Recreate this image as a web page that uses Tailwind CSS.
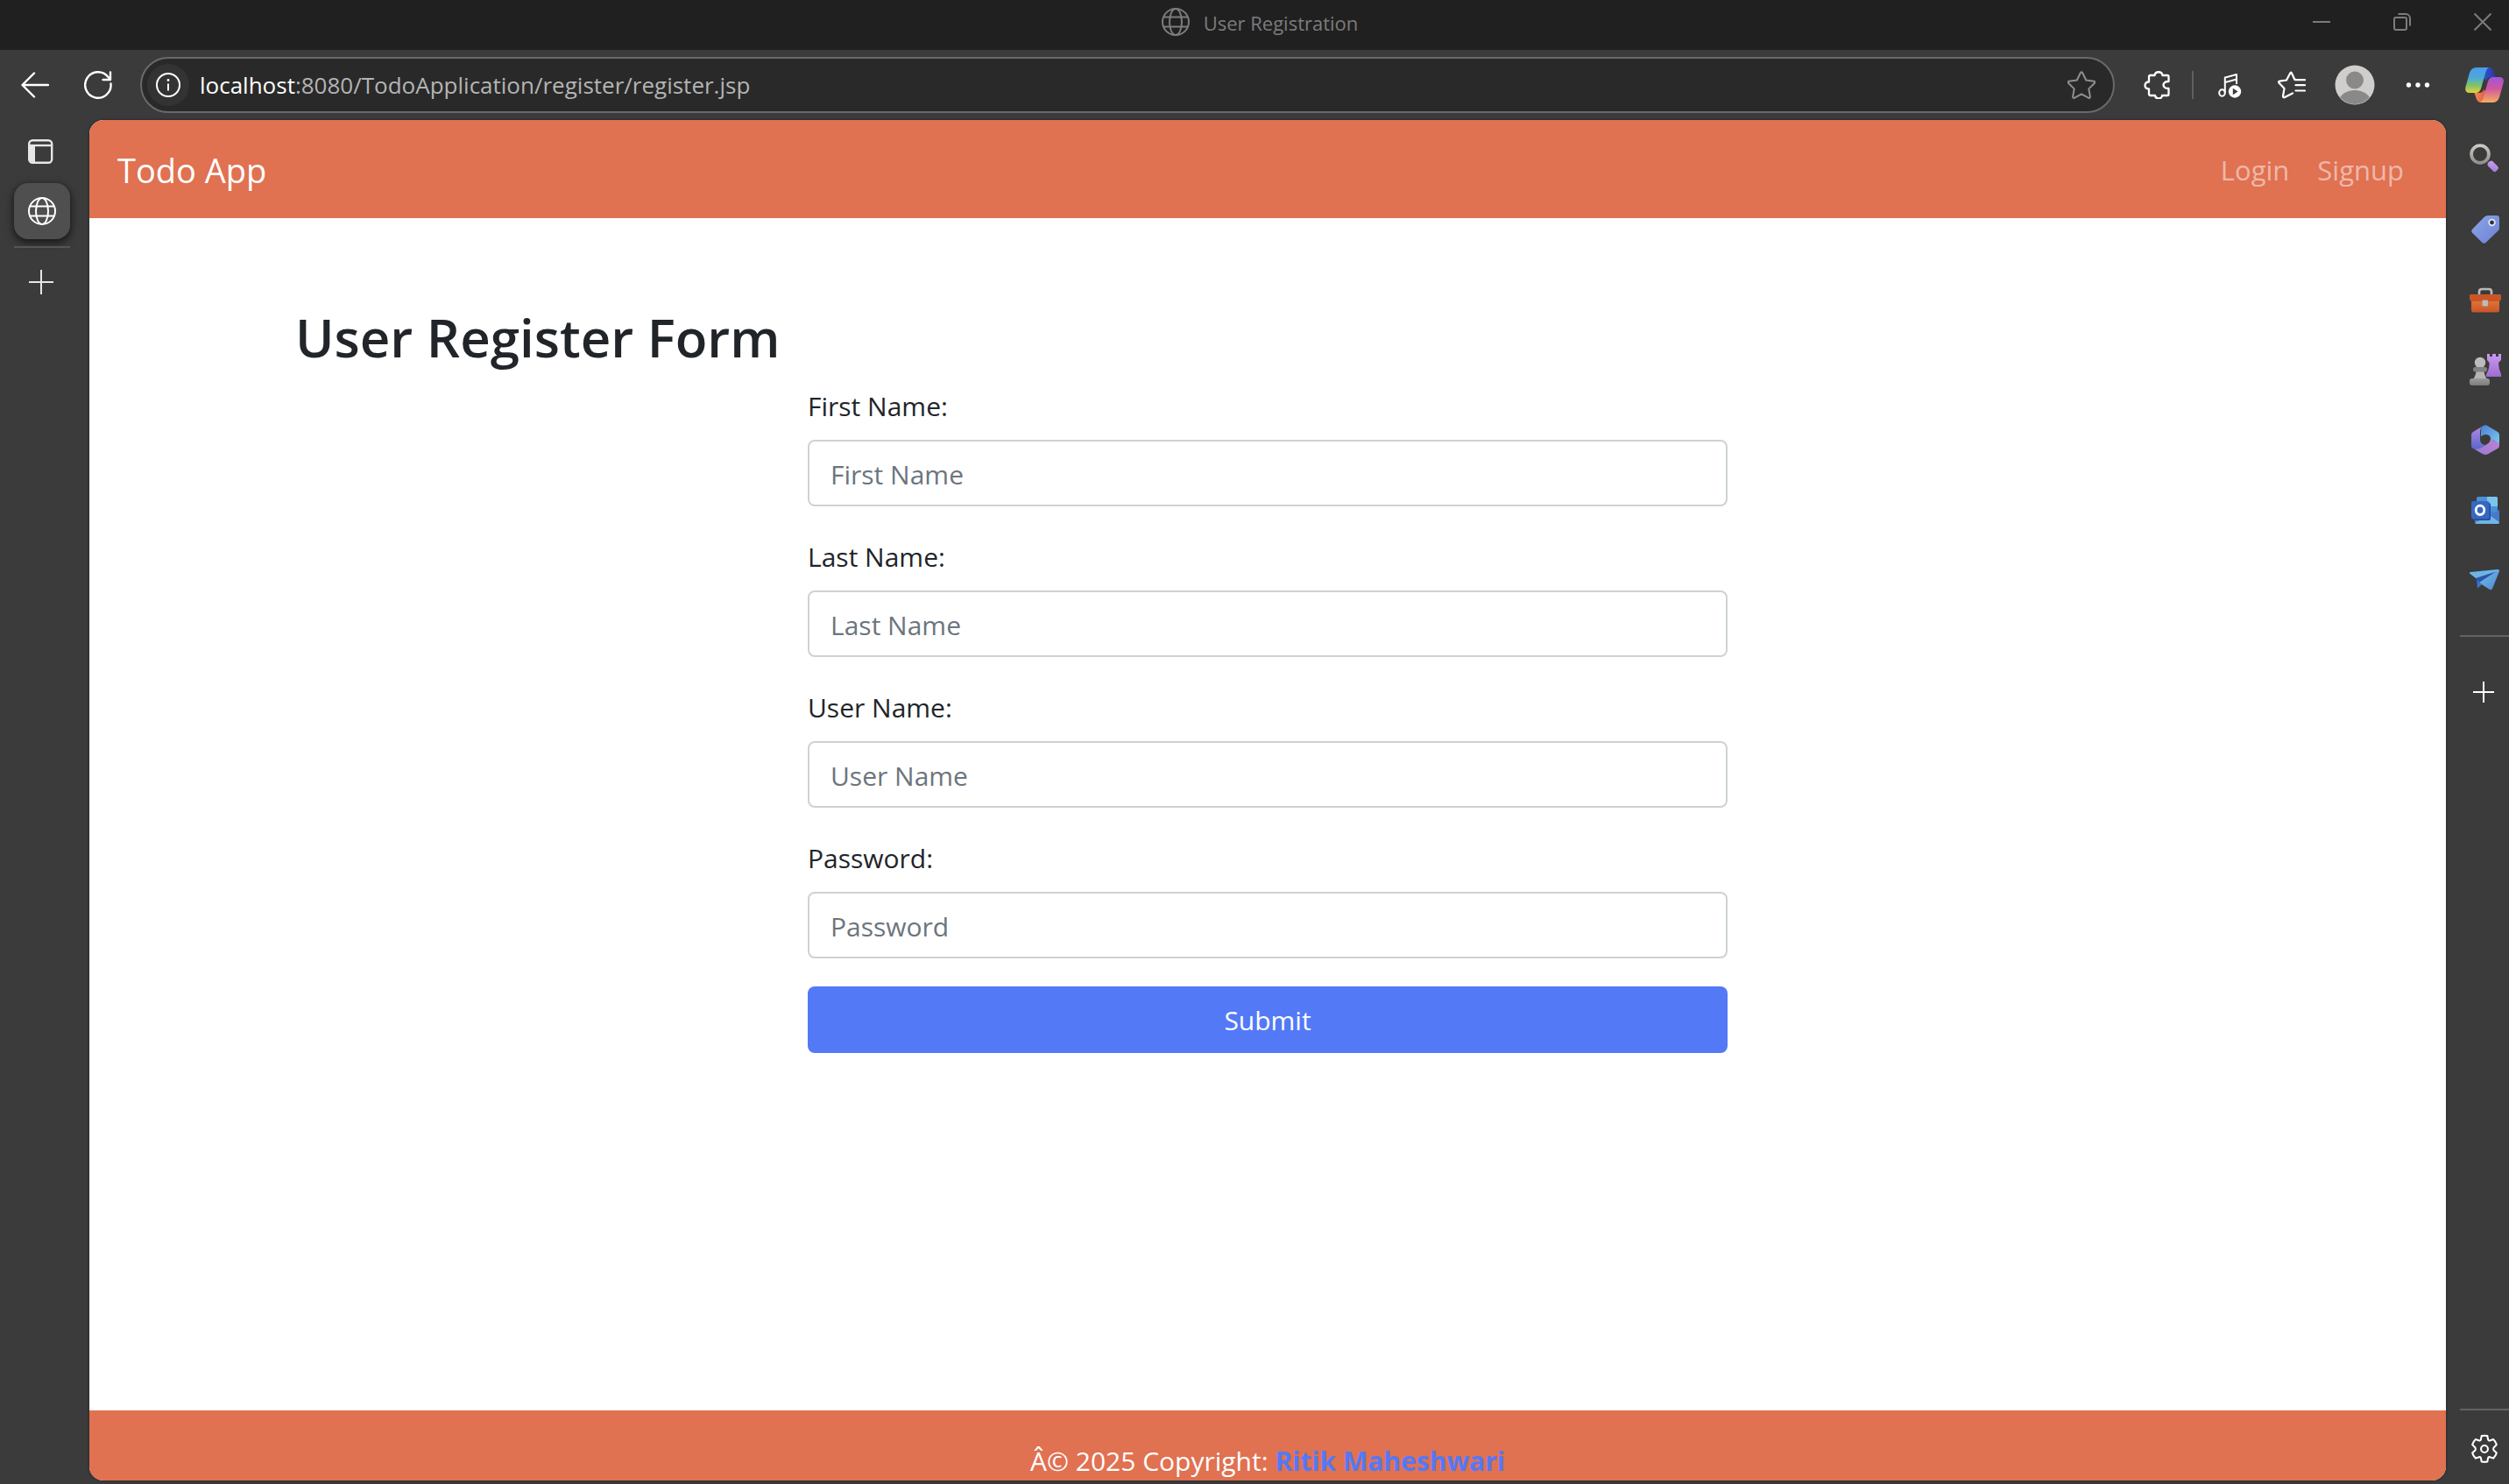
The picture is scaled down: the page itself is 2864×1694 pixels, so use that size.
<!DOCTYPE html>
<html lang="en">
<head>
<meta charset="utf-8">
<meta name="viewport" content="width=device-width, initial-scale=1">
<title>User Registration</title>
<script src="https://cdn.jsdelivr.net/npm/@tailwindcss/browser@4"></script>
</head>
<body class="h-screen overflow-hidden flex flex-col bg-[#3b3b3b] font-['Open_Sans','Noto_Sans',sans-serif]">

<!-- Title bar -->
<header class="shrink-0 h-[57px] bg-[#202020] text-[#7c7c7c] grid grid-cols-[1fr_auto_1fr] pb-[7px]">
  <div></div>
  <div class="flex items-center gap-4 pl-3">
    <svg class="size-8" viewBox="0 0 32 32" fill="none" stroke="currentColor" stroke-width="2"><circle cx="16" cy="16" r="15"/><ellipse cx="16" cy="16" rx="7" ry="15"/><path d="M2 10.500h28M2 21.500h28"/></svg>
    <span class="text-[22px] leading-8 pt-0.5">User Registration</span>
  </div>
  <div class="flex items-center justify-end gap-[72px] pr-5">
    <button aria-label="Minimize"><svg class="size-5" viewBox="0 0 20 20" stroke="currentColor" stroke-width="2"><path d="M0 10h20"/></svg></button>
    <button aria-label="Restore"><svg class="size-5" viewBox="0 0 20 20" fill="none" stroke="currentColor" stroke-width="2"><rect x="1" y="5" width="14" height="14" rx="2"/><path d="M5.500 1H14a5 5 0 0 1 5 5v8.500"/></svg></button>
    <button aria-label="Close"><svg class="size-5" viewBox="0 0 20 20" stroke="currentColor" stroke-width="2"><path d="M.5.5l19 19M19.500.5l-19 19"/></svg></button>
  </div>
</header>

<!-- Toolbar -->
<nav class="shrink-0 h-20 flex items-center pl-6 text-white" aria-label="Browser">
  <button aria-label="Back" class="mr-10"><svg class="size-8" viewBox="0 0 32 32" fill="none" stroke="currentColor" stroke-width="2.400" stroke-linecap="round" stroke-linejoin="round"><path d="M15 2.500L1.500 16 15 29.500M2 16h29"/></svg></button>
  <button aria-label="Reload" class="mr-8"><svg class="size-8" viewBox="0 0 32 32" fill="none" stroke="currentColor" stroke-width="2.400" stroke-linecap="round" stroke-linejoin="round"><path d="M30.500 14.500A14.700 14.700 0 1 1 27.500 7L30 9.500M30 1.500v8.500h-8.500"/></svg></button>
  <div class="flex-1 h-16 flex items-center rounded-full border-2 border-[#6b6969] bg-[#292929] pl-1.5 pr-5">
    <button aria-label="Site information" class="size-12 rounded-full bg-[#333333] flex items-center justify-center mr-3"><svg class="size-7" viewBox="0 0 28 28" fill="none" stroke="currentColor" stroke-width="2"><circle cx="14" cy="14" r="13"/><path d="M14 12.500v8"/><circle cx="14" cy="8.500" r="1.400" fill="currentColor" stroke="none"/></svg></button>
    <div role="textbox" aria-label="Address" class="flex-1 text-[26px] leading-9 text-[#b4b4b4]"><span class="text-white">localhost</span>:8080/TodoApplication/register/register.jsp</div>
    <button aria-label="Add to favorites"><svg class="size-8" viewBox="0 0 32 32" fill="none" stroke="#8f8f8f" stroke-width="2" stroke-linejoin="round"><path d="M14.800 2.200q1.200-2 2.400 0l4 8.300 9 1.300q2 .5.600 2.200l-6.500 6.400 1.600 9q0 2-2 1.300L16 26.400l-7.900 4.300q-2 .7-2-1.300l1.600-9L1.200 14q-1.400-1.700.6-2.200l9-1.300z"/></svg></button>
  </div>
  <button aria-label="Extensions" class="w-20 ml-2 flex justify-center"><svg class="size-8" viewBox="0 0 32 32" fill="none" stroke="currentColor" stroke-width="2.300" stroke-linejoin="round"><path d="M8 5h5.500c.7-5 8.300-5 9 0H28q1.500 0 1.500 1.500V12c-8-.5-8 8.500 0 8v6.500Q29.500 28 28 28h-6c0 4.500-7.500 4.500-8 0H9q-2 0-2-2v-5.500c-6 .5-6-8.500 0-8V6.500Q7 5 8 5z"/></svg></button>
  <div class="w-0.5 h-8 bg-[#5f5f5f] mr-1"></div>
  <button aria-label="Media" class="w-18 flex justify-center"><svg class="size-8" viewBox="0 0 32 32" fill="none" stroke="currentColor" stroke-width="2"><ellipse cx="8.500" cy="25" rx="3.300" ry="3.700"/><path d="M11.800 25V7.500L25 4v11M11.800 13L25 9.500" stroke-linejoin="round"/><circle cx="23" cy="23.500" r="7.200" fill="currentColor" stroke="none"/><path d="M20.800 19.800l5.800 3.700-5.800 3.700z" fill="#3b3b3b" stroke="none"/></svg></button>
  <button aria-label="Favorites" class="w-18 flex justify-center"><svg class="size-8" viewBox="0 0 32 32" fill="none" stroke="currentColor" stroke-width="2.200" stroke-linecap="round" stroke-linejoin="round"><path d="M21.500 10l-2.200-.3-3.200-7q-1-2-2 0L10 10.500l-7.800 1.100q-1.900.5-.6 2.200L7.500 20 6 28.700q0 2 2 1.400l9-4.700M20 10.200h11M20.500 16.200H31M20.500 22.500H31"/></svg></button>
  <button aria-label="Profile" class="w-18 flex justify-center"><svg class="size-[46px]" viewBox="0 0 46 46"><defs><clipPath id="av"><circle cx="23" cy="23" r="22"/></clipPath></defs><circle cx="23" cy="23" r="22.500" fill="#d0cecc"/><circle cx="23" cy="17.500" r="10" fill="#8b8988"/><ellipse cx="23" cy="42" rx="18" ry="13" fill="#8b8988" clip-path="url(#av)"/></svg></button>
  <button aria-label="More" class="w-18 flex justify-center"><svg class="size-8" viewBox="0 0 32 32" fill="currentColor"><circle cx="5.500" cy="16" r="2.700"/><circle cx="16" cy="16" r="2.700"/><circle cx="26.500" cy="16" r="2.700"/></svg></button>
  <button aria-label="Copilot" class="w-14 ml-3 flex justify-center"><svg class="size-11" viewBox="0 0 44 44">
    <defs>
      <linearGradient id="c1" x1="0" y1="0" x2="0" y2="1"><stop offset="0" stop-color="#4f9bea"/><stop offset=".4" stop-color="#4aa9dc"/><stop offset=".7" stop-color="#7cc36a"/><stop offset="1" stop-color="#e6cf3e"/></linearGradient>
      <linearGradient id="c2" x1="0" y1="0" x2="0" y2="1"><stop offset="0" stop-color="#9d55e0"/><stop offset=".45" stop-color="#d2569f"/><stop offset="1" stop-color="#f5ae5c"/></linearGradient>
      <linearGradient id="c3" x1="0" y1="0" x2="1" y2="0"><stop offset="0" stop-color="#3168d8"/><stop offset="1" stop-color="#2a35b0"/></linearGradient>
      <linearGradient id="c4" x1="0" y1="0" x2="1" y2="0"><stop offset="0" stop-color="#f08a50"/><stop offset="1" stop-color="#d8463c"/></linearGradient>
    </defs>
    <path d="M14 2h13q4 0 5.500 5l2 6H29q-4 0-5.500 4z" fill="url(#c3)"/>
    <path d="M30 42H18q-4 0-5.500-5l-2-6H16q4 0 5.500-4z" fill="url(#c4)"/>
    <path d="M13 2h15q-3 0-4.500 5L18 26q-1.500 5-6 5H5q-6 0-4.500-7L5 8q2-6 8-6z" fill="url(#c1)"/>
    <path d="M31 42H16q3 0 4.500-5L26 18q1.500-5 6-5h7q6 0 4.500 7L39 36q-2 6-8 6z" fill="url(#c2)"/>
  </svg></button>
</nav>

<div class="flex-1 min-h-0 flex">
  <!-- Vertical tabs -->
  <aside class="w-[102px] shrink-0 flex flex-col items-start pl-4 pt-5 text-[#e6e6e6]">
    <button aria-label="Tab actions" class="ml-4 mb-5"><svg class="size-8" viewBox="0 0 32 32" fill="none" stroke="currentColor" stroke-width="2.400"><rect x="1.200" y="3.200" width="26" height="25.600" rx="4"/><path d="M2 9h25"/><path d="M1.500 8.500H8V28H5q-3.500 0-3.500-4z" fill="currentColor" stroke="none"/></svg></button>
    <button aria-label="User Registration" class="size-16 rounded-2xl bg-[#4f4f4f] shadow-[0_3px_8px_1px_rgba(0,0,0,0.6)] flex items-center justify-center text-white"><svg class="size-8" viewBox="0 0 32 32" fill="none" stroke="currentColor" stroke-width="2"><circle cx="16" cy="16" r="15"/><ellipse cx="16" cy="16" rx="7" ry="15"/><path d="M2 10.500h28M2 21.500h28"/></svg></button>
    <div class="w-16 h-0.5 bg-[#565656] mt-2 mb-6"></div>
    <button aria-label="New tab" class="ml-4"><svg class="size-8" viewBox="0 0 32 32" fill="none" stroke="currentColor" stroke-width="2"><path d="M15 1v28M1 15h28"/></svg></button>
  </aside>

  <!-- Web page -->
  <div class="flex-1 min-w-0 mb-1 rounded-[16px] overflow-hidden bg-white flex flex-col text-[30px] leading-[52px] shadow-[0_0_3px_rgba(0,0,0,0.5)]">
    <nav class="h-28 shrink-0 bg-[#e07151] flex items-center justify-between px-8 pt-0.5" aria-label="Main">
      <a href="#" class="text-[38px] text-white">Todo App</a>
      <div class="flex gap-8 px-4 text-[31px] text-white/50">
        <a href="#">Login</a>
        <a href="#">Signup</a>
      </div>
    </nav>
    <main class="flex-1 min-h-0 pt-24 text-[#212529]">
      <div class="max-w-[2280px] mx-auto px-[30px]">
        <h1 class="text-[60px] leading-[81px] font-semibold mb-3">User Register Form</h1>
        <form class="w-full max-w-[1050px] mx-auto flex flex-col gap-8">
          <div class="flex flex-col gap-3">
            <label for="first">First Name:</label>
            <input id="first" type="text" placeholder="First Name" class="h-[76px] w-full rounded-lg border-2 border-[#ced2d5] px-6 pt-0.5 placeholder:text-[#6c757d]">
          </div>
          <div class="flex flex-col gap-3">
            <label for="last">Last Name:</label>
            <input id="last" type="text" placeholder="Last Name" class="h-[76px] w-full rounded-lg border-2 border-[#ced2d5] px-6 pt-0.5 placeholder:text-[#6c757d]">
          </div>
          <div class="flex flex-col gap-3">
            <label for="user">User Name:</label>
            <input id="user" type="text" placeholder="User Name" class="h-[76px] w-full rounded-lg border-2 border-[#ced2d5] px-6 pt-0.5 placeholder:text-[#6c757d]">
          </div>
          <div class="flex flex-col gap-3">
            <label for="pass">Password:</label>
            <input id="pass" type="password" placeholder="Password" class="h-[76px] w-full rounded-lg border-2 border-[#ced2d5] px-6 pt-0.5 placeholder:text-[#6c757d]">
          </div>
          <button type="submit" class="h-[76px] w-full rounded-lg bg-[#5379f7] pt-0.5 text-white">Submit</button>
        </form>
      </div>
    </main>
    <footer class="h-20 shrink-0 bg-[#e07151] pt-8 text-center text-white">Â© 2025 Copyright: <a href="#" class="font-bold text-[#5379f7]">Ritik Maheshwari</a></footer>
  </div>

  <!-- Sidebar -->
  <aside class="w-[72px] shrink-0 pl-4 pt-[5px] flex flex-col text-white">
    <button aria-label="Search" class="h-20 flex items-center justify-center"><svg class="size-10" viewBox="0 0 40 40"><defs><linearGradient id="s1" x1="0" y1="0" x2="0" y2="1"><stop offset="0" stop-color="#c9c9c5"/><stop offset="1" stop-color="#8f8f8c"/></linearGradient><linearGradient id="s2" x1="0" y1="0" x2="1" y2="1"><stop offset="0" stop-color="#c9a2ee"/><stop offset="1" stop-color="#a679d8"/></linearGradient></defs><path d="M24 23l4 4" stroke="#777" stroke-width="2"/><circle cx="15" cy="14" r="9.900" fill="none" stroke="url(#s1)" stroke-width="3.800"/><rect x="23" y="24" width="13" height="7.500" rx="2.500" fill="url(#s2)" transform="rotate(45 29.500 28)"/></svg></button>
    <button aria-label="Shopping" class="h-20 flex items-center justify-center"><svg class="size-10" viewBox="0 0 40 40"><defs><linearGradient id="t1" x1="0" y1="0" x2="1" y2="1"><stop offset="0" stop-color="#8ba8ea"/><stop offset="1" stop-color="#6d80d2"/></linearGradient></defs><path d="M24 4h10q3 0 3 3v11q0 2-1.500 3.500L22 34.500q-2.500 2.500-5 0L6.300 24q-2-2.300 0-4.500L20 5.500Q21.500 4 24 4z" fill="url(#t1)"/><circle cx="28.500" cy="12" r="3.300" fill="#333" stroke="#dfe7fb" stroke-width="1.800"/></svg></button>
    <button aria-label="Tools" class="h-20 flex items-center justify-center"><svg class="size-10" viewBox="0 0 40 40"><defs><linearGradient id="b1" x1="0" y1="0" x2="0" y2="1"><stop offset="0" stop-color="#e2763a"/><stop offset="1" stop-color="#c9562a"/></linearGradient></defs><path d="M14 15v-4q0-3 3-3h8q3 0 3 3v4" fill="none" stroke="#b9b9b7" stroke-width="2.600"/><path d="M5 20h32v12q0 2.500-2.500 2.500h-27Q5 34.500 5 32z" fill="url(#b1)"/><path d="M4 14h34q1 0 1 1v4q0 3-4 3H7q-4 0-4-3v-4q0-1 1-1z" fill="#c95527"/><rect x="17.500" y="20.500" width="6.500" height="7" rx="1" fill="#bdbbb9"/></svg></button>
    <button aria-label="Games" class="h-20 flex items-center justify-center"><svg class="size-10" viewBox="0 0 40 40"><defs><linearGradient id="g1" x1="0" y1="0" x2="0" y2="1"><stop offset="0" stop-color="#9a9a9a"/><stop offset="1" stop-color="#7d7d7d"/></linearGradient><linearGradient id="g2" x1="0" y1="0" x2="0" y2="1"><stop offset="0" stop-color="#c99af0"/><stop offset="1" stop-color="#9c6cd2"/></linearGradient></defs><path d="M23 2h3v3h3V2h4v3h3V2h3v7l-3 3q0 7 3 13v3H22v-3q4-6 3.500-13L23 9z" fill="url(#g2)"/><path d="M11 20h8q1 7 4 11H7q3-4 4-11z" fill="#b5b5b5"/><circle cx="15" cy="12" r="6.200" fill="#bcbcbc"/><rect x="7" y="17" width="16" height="5.500" rx="2.700" fill="#828282"/><rect x="3" y="30" width="23" height="8" rx="3" fill="url(#g1)"/></svg></button>
    <button aria-label="Microsoft 365" class="h-20 flex items-center justify-center"><svg class="size-10" viewBox="0 0 40 40"><defs><linearGradient id="m1" x1="0" y1="0" x2="0" y2="1"><stop offset="0" stop-color="#b488de"/><stop offset="1" stop-color="#5566cc"/></linearGradient><linearGradient id="m2" x1="0" y1="0" x2="1" y2="1"><stop offset="0" stop-color="#4a80d8"/><stop offset="1" stop-color="#7cc8ee"/></linearGradient><linearGradient id="m3" x1="0" y1="1" x2="1" y2="0"><stop offset="0" stop-color="#9a78d4"/><stop offset="1" stop-color="#c184d4"/></linearGradient></defs><path d="M17 5L7 11q-2 1.200-2 3.500v12q0 2.500 2 3.500l3 1.500q3 0 8-3.500l3-2q-6-1-6-6V10q0-3 2-5z" fill="url(#m1)"/><path d="M17 5q4-3.500 8 0l10 6q2 1 2 3.500v10L27 19q0-5-6-5-3 0-5 2.500V10q0-4 1-5z" fill="url(#m2)"/><path d="M37 23v3.500q0 2.500-2 3.500l-10.500 6q-3.500 2-7 0L9 31q4 .5 9-3l5-3q4-2 4-7 4 5 10 5z" fill="url(#m3)"/></svg></button>
    <button aria-label="Outlook" class="h-20 flex items-center justify-center"><svg class="size-10" viewBox="0 0 40 40"><path d="M13 5h20q2 0 2 2v18H11V7q0-2 2-2z" fill="#4a90d9"/><path d="M23 5h10q2 0 2 2v9H23z" fill="#7cc4ee"/><path d="M9 22h28v12q0 2-2 2H11q-2 0-2-2z" fill="#4b83cf"/><path d="M9 35l17-9 11 8q0 2-2 2H11z" fill="#6fb6e8"/><path d="M37 20v14l-11-8z" fill="#4679ca"/><rect x="7" y="12" width="20" height="20" rx="2" fill="#264a94"/><rect x="5" y="10" width="20.500" height="20.500" rx="2.500" fill="#3668c2"/><ellipse cx="15" cy="20.300" rx="4.800" ry="5.200" fill="none" stroke="#fff" stroke-width="2.800"/></svg></button>
    <button aria-label="Drop" class="h-20 flex items-center justify-center"><svg class="size-10" viewBox="0 0 40 40"><defs><linearGradient id="p1" x1="0" y1="0" x2="1" y2="1"><stop offset="0" stop-color="#79c1ec"/><stop offset="1" stop-color="#4a84d0"/></linearGradient></defs><path d="M10 17l27-9-20 14-5 8z" fill="#2c55a8"/><path d="M4 11l31-3q2.500 0 1 1.500L10 18l-7-5.500Q2.500 11.300 4 11z" fill="#6db5e6"/><path d="M14 23l22-14.500q1.500-.5 1 1.500l-8 20q-1 2-3 1l-7-4.500z" fill="url(#p1)"/><path d="M12 20l2 3 3 2.500-5 4z" fill="#3f76c9"/></svg></button>
    <div class="h-0.5 bg-[#636363] mt-[23px] mb-12"></div>
    <button aria-label="Customize" class="flex justify-center"><svg class="size-8" viewBox="0 0 32 32" fill="none" stroke="currentColor" stroke-width="2"><path d="M15 3v24M3 15h24"/></svg></button>
    <div class="mt-auto h-0.5 bg-[#636363]"></div>
    <button aria-label="Settings" class="h-[84px] flex justify-center pt-7"><svg class="size-8" viewBox="0 0 32 34" fill="none" stroke="currentColor" stroke-width="2.200" stroke-linejoin="round" overflow="visible"><path d="M12.500 1.200q3.500-.8 7 0l.9 4.600q.5 1.400 2 1l4.300-1.500q3 2.700 4 6.500l-3.500 3.600q-1 1.600 0 3.200l3.500 3.200q-1 3.800-4 6.500l-4.300-1.500q-1.500-.4-2 1l-.9 4.600q-3.500.8-7 0l-.9-4.600q-.5-1.400-2-1l-4.300 1.500q-3-2.700-4-6.500l3.500-3.200q1-1.600 0-3.200L1.300 11.800q1-3.800 4-6.500l4.300 1.500q1.500.4 2-1z"/><circle cx="16" cy="17" r="4.200"/></svg></button>
  </aside>
</div>
</body>
</html>
